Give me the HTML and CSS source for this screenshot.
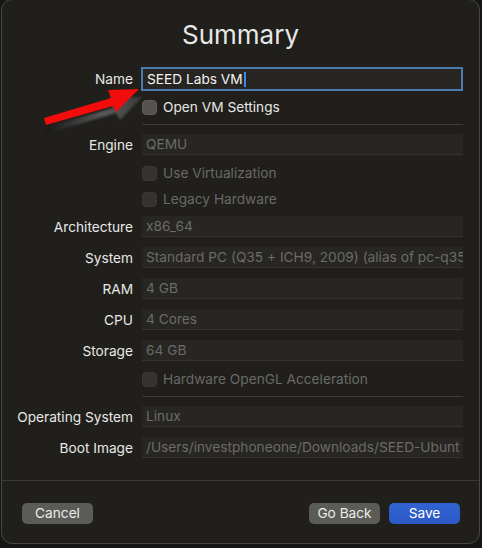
FILE: index.html
```html
<!DOCTYPE html>
<html lang="en">
<head>
<meta charset="utf-8">
<title>Summary</title>
<link rel="stylesheet" href="styles.css">
</head>
<body>
<div class="desk">
  <div class="window">
    <h1 class="title">Summary</h1>

    <div class="form">
      <div class="row r-name">
        <span class="label">Name</span>
        <div class="input focused">SEED Labs VM<span class="caret"></span></div>
      </div>
      <div class="row r-check r-open">
        <span></span>
        <span class="check"><span class="box"></span>Open VM Settings</span>
      </div>
      <div class="sep s-first"></div>

      <div class="row r-field r-engine">
        <span class="label">Engine</span>
        <div class="input">QEMU</div>
      </div>
      <div class="row r-check r-virt">
        <span></span>
        <span class="check off"><span class="box"></span>Use Virtualization</span>
      </div>
      <div class="row r-check r-legacy">
        <span></span>
        <span class="check off"><span class="box"></span>Legacy Hardware</span>
      </div>

      <div class="row r-field r-arch">
        <span class="label">Architecture</span>
        <div class="input">x86_64</div>
      </div>
      <div class="row r-field">
        <span class="label">System</span>
        <div class="input">Standard PC (Q35 + ICH9, 2009) (alias of pc-q35</div>
      </div>
      <div class="row r-field">
        <span class="label">RAM</span>
        <div class="input">4 GB</div>
      </div>
      <div class="row r-field">
        <span class="label">CPU</span>
        <div class="input">4 Cores</div>
      </div>
      <div class="row r-field">
        <span class="label">Storage</span>
        <div class="input">64 GB</div>
      </div>
      <div class="row r-check r-gl">
        <span></span>
        <span class="check off"><span class="box"></span>Hardware OpenGL Acceleration</span>
      </div>
      <div class="sep s-second"></div>

      <div class="row r-field r-os">
        <span class="label">Operating System</span>
        <div class="input">Linux</div>
      </div>
      <div class="row r-field">
        <span class="label">Boot Image</span>
        <div class="input">/Users/investphoneone/Downloads/SEED-Ubunt</div>
      </div>
    </div>

    <div class="footer">
      <button class="btn">Cancel</button>
      <span class="spacer"></span>
      <button class="btn">Go Back</button>
      <button class="btn primary">Save</button>
    </div>

    <!-- annotation arrow pointing at the name field -->
    <svg class="arrow" width="110" height="50" viewBox="0 0 110 50">
      <defs>
        <linearGradient id="shade" x1="0" y1="0" x2="1" y2="0">
          <stop offset="0" stop-color="#1a1a1a"/>
          <stop offset="0.6" stop-color="#5a5a5a"/>
          <stop offset="1" stop-color="#3a3a3a"/>
        </linearGradient>
        <filter id="soft" x="-20%" y="-40%" width="140%" height="180%">
          <feGaussianBlur stdDeviation="0.8"/>
        </filter>
      </defs>
      <g transform="translate(3 5)" filter="url(#soft)">
        <polygon fill="url(#shade)" points="2,37 68,18 65,8 97,7 75,30 71,23 4,43"/>
      </g>
      <polygon fill="#f20c0c" points="2,33 69,13 66,5 97,4 74,27 71,21 4,40"/>
    </svg>
  </div>
</div>
</body>
</html>
```

FILE: styles.css
```css
* {
  box-sizing: border-box;
}

html, body {
  margin: 0;
  padding: 0;
}

body {
  width: 482px;
  height: 548px;
  overflow: hidden;
  background: #151515;
  font-family: Inter, "Noto Sans", "Liberation Sans", sans-serif;
  font-size: 13.7px;
  color: #e4e4e2;
}

.desk {
  padding: 0 0 0 1px;
  margin-top: -1px;
}

.window {
  position: relative;
  width: 479px;
  height: 545px;
  display: flex;
  flex-direction: column;
  background: #201f1c;
  border: 1px solid #47463f;
  border-radius: 11px;
  overflow: hidden;
}

.title {
  margin: 0;
  padding-top: 18px;
  height: 52px;
  line-height: 34px;
  text-align: center;
  font-size: 26px;
  font-weight: 400;
  color: #e8e8e6;
}

.form {
  display: flex;
  flex-direction: column;
}

.row {
  display: grid;
  grid-template-columns: 131px 321px;
  column-gap: 9px;
  align-items: center;
}

.label {
  text-align: right;
  color: #e8e8e6;
  white-space: nowrap;
}

.input {
  height: 21px;
  line-height: 20px;
  padding: 0 4px;
  background: #272623;
  border-bottom: 1px solid #34332f;
  color: #6c6b67;
  white-space: nowrap;
  overflow: hidden;
  text-overflow: clip;
}

.input.focused {
  height: 24px;
  line-height: 20px;
  margin-left: -1px;
  width: 322px;
  padding: 0 4px;
  background: #262522;
  border: 2px solid #4a7aae;
  color: #f2f2f0;
}

.caret {
  display: inline-block;
  width: 2px;
  height: 15px;
  margin-left: 1px;
  vertical-align: -3px;
  background: #3f86f0;
}

.r-name {
  margin-top: 15px;
  height: 24px;
}

.r-check {
  height: 20px;
}

.r-open {
  margin-top: 6px;
}

.r-virt {
  margin-top: 8px;
}

.r-legacy {
  margin-top: 6px;
}

.r-gl {
  margin-top: 8px;
}

.r-field {
  height: 21px;
  margin-top: 10px;
}

.r-engine {
  margin-top: 9px;
}

.r-arch {
  margin-top: 7px;
}

.r-os {
  margin-top: 9px;
}

.check {
  display: flex;
  align-items: center;
  gap: 6px;
  color: #e6e6e4;
  white-space: nowrap;
}

.check .box {
  width: 15px;
  height: 15px;
  border-radius: 4px;
  background: #54534f;
  border: 1px solid #5e5d59;
}

.check.off {
  color: #6a6965;
}

.check.off .box {
  background: #34332f;
  border-color: #3a3935;
}

.sep {
  height: 1px;
  margin-left: 140px;
  width: 321px;
  background: #3b3a36;
}

.s-first {
  margin-top: 7px;
}

.s-second {
  margin-top: 7px;
}

.footer {
  margin-top: auto;
  height: 63px;
  display: flex;
  align-items: flex-start;
  gap: 9px;
  padding: 22px 19px 0 20px;
  border-top: 1px solid #3a3935;
}

.spacer {
  flex: 1;
}

.btn {
  width: 71px;
  height: 21px;
  padding: 0;
  border: none;
  border-radius: 5px;
  background: #5b5b57;
  color: #ececea;
  font-family: inherit;
  font-size: 13.7px;
  line-height: 21px;
  text-align: center;
}

.btn.primary {
  background: linear-gradient(#3164d2, #2b58c4);
  color: #ffffff;
}

.arrow {
  position: absolute;
  left: 40px;
  top: 85px;
}
```
